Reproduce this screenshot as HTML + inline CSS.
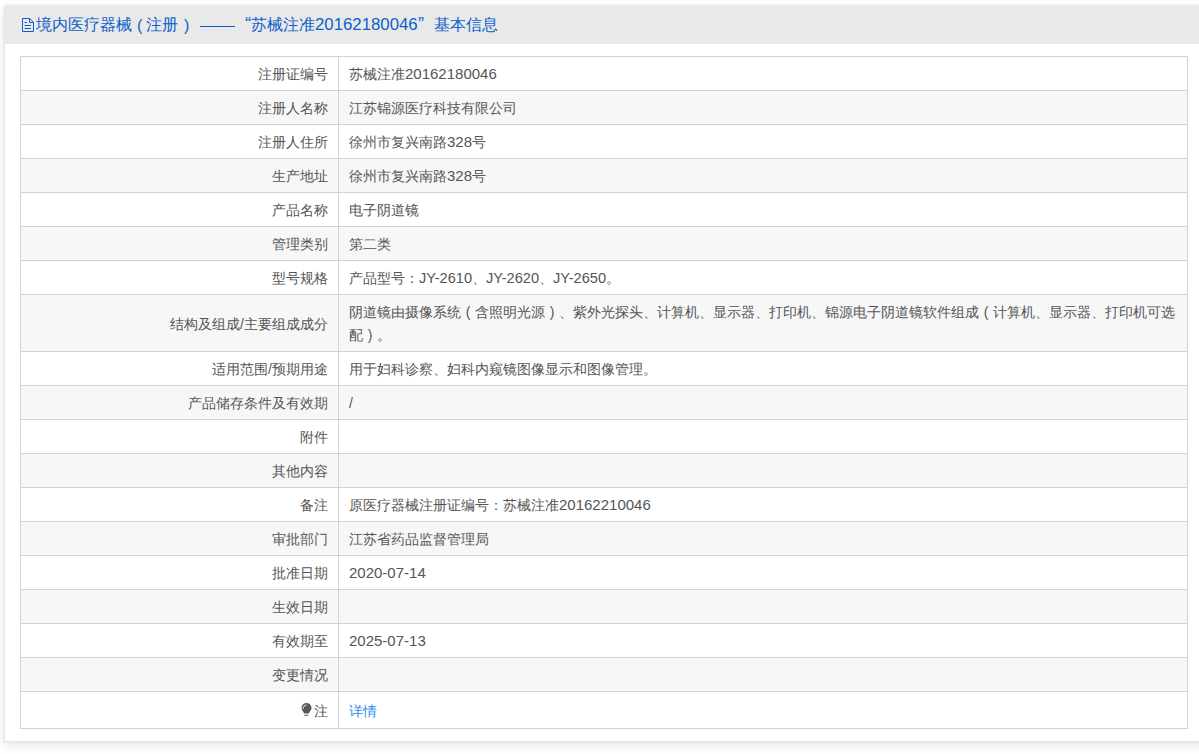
<!DOCTYPE html>
<html><head><meta charset="utf-8">
<style>
html,body{margin:0;padding:0;background:#fff;}
body{width:1199px;height:754px;overflow:hidden;position:relative;font-family:"Liberation Sans",sans-serif;font-size:14px;color:#555;}
.card{position:absolute;left:4px;top:5px;width:1210px;height:736px;background:#fff;border:1px solid #e6e6e6;border-top:0;box-shadow:0 4px 10px rgba(0,0,0,0.09),0 0 4px rgba(0,0,0,0.06);}
.hd{position:absolute;left:0;top:0;right:0;height:38px;background:#e9e9e9;border-bottom:1px solid #e7eaf2;color:#0d5fcc;font-size:16px;}
.hd .dg{font-size:16.8px;}
.hd span{position:absolute;top:9px;line-height:22px;white-space:nowrap;}
table{position:absolute;left:15px;top:51px;width:1168px;border-collapse:collapse;table-layout:fixed;}
td{border:1px solid #d3d3d3;height:33px;padding:1px 10px 0 10px;line-height:22px;box-sizing:border-box;}
tr{height:34px;}
td.l{width:318px;text-align:right;}
tr:nth-child(even) td{background:#f7f7f7;}
tr.tall{height:57px;} tr.tall td{line-height:23px;padding-top:2px;}
.fp{display:inline-block;width:14px;text-align:center;font-weight:normal;}
tr.last{height:37px;} 
i.n{font-style:normal;font-size:15px;line-height:14px;}
a{color:#2d8cf0;text-decoration:none;}
</style></head><body>
<div class="card">
<div class="hd">
<svg style="position:absolute;left:16px;top:12px" width="14" height="16" viewBox="0 0 14 16"><path d="M1.5 1.5H8.7L12.5 5.3V14.5H1.5Z M8.5 1.5V5.5H12.5 M3.6 5.5H6 M3.6 8.5H10 M3.6 11.5H10" fill="none" stroke="#0d5fcc" stroke-width="1"/></svg>
<span style="left:31px">境内医疗器械</span><span style="left:132px;font-size:16px;top:10px">(</span><span style="left:141px">注册</span><span style="left:179px;font-size:16px;top:10px">)</span><div style="position:absolute;left:195px;top:21px;width:35px;height:1px;background:#0d5fcc"></div><span style="left:240px;font-size:18px;top:8px">“</span><span style="left:246px">苏械注准</span><span style="left:310px" class="dg">20162180046</span><span style="left:413px;font-size:18px;top:8px">”</span><span style="left:429px">基本信息</span>
</div>
<table>
<tr><td class="l">注册证编号</td><td>苏械注准<i class="n">20162180046</i></td></tr>
<tr><td class="l">注册人名称</td><td>江苏锦源医疗科技有限公司</td></tr>
<tr><td class="l">注册人住所</td><td>徐州市复兴南路<i class="n">328</i>号</td></tr>
<tr><td class="l">生产地址</td><td>徐州市复兴南路<i class="n">328</i>号</td></tr>
<tr><td class="l">产品名称</td><td>电子阴道镜</td></tr>
<tr><td class="l">管理类别</td><td>第二类</td></tr>
<tr><td class="l">型号规格</td><td>产品型号：<i class="n" style="font-size:14.6px">JY-2610</i>、<i class="n" style="font-size:14.6px">JY-2620</i>、<i class="n" style="font-size:14.6px">JY-2650</i>。</td></tr>
<tr class="tall"><td class="l">结构及组成/主要组成成分</td><td>阴道镜由摄像系统<b class="fp">(</b>含照明光源<b class="fp">)</b>、紫外光探头、计算机、显示器、打印机、锦源电子阴道镜软件组成<b class="fp">(</b>计算机、显示器、打印机可选配<b class="fp">)</b>。</td></tr>
<tr><td class="l">适用范围/预期用途</td><td>用于妇科诊察、妇科内窥镜图像显示和图像管理。</td></tr>
<tr><td class="l">产品储存条件及有效期</td><td>/</td></tr>
<tr><td class="l">附件</td><td></td></tr>
<tr><td class="l">其他内容</td><td></td></tr>
<tr><td class="l">备注</td><td>原医疗器械注册证编号：苏械注准<i class="n">20162210046</i></td></tr>
<tr><td class="l">审批部门</td><td>江苏省药品监督管理局</td></tr>
<tr><td class="l">批准日期</td><td><i class="n">2020-07-14</i></td></tr>
<tr><td class="l">生效日期</td><td></td></tr>
<tr><td class="l">有效期至</td><td><i class="n">2025-07-13</i></td></tr>
<tr><td class="l">变更情况</td><td></td></tr>
<tr class="last"><td class="l"><svg style="vertical-align:0px;margin-right:2px" width="11" height="13" viewBox="0 0 11 13"><path d="M0.5 5A5 5 0 1 1 10.5 5C10.5 7.2 8.6 8.2 7.9 10.4H3.1C2.4 8.2 0.5 7.2 0.5 5Z" fill="#585858"/><rect x="3.4" y="11.8" width="4" height="1" fill="#585858"/><path d="M2.2 6A3.3 3.3 0 0 1 5.6 2.1" fill="none" stroke="#fff" stroke-width="0.9"/></svg>注</td><td><a>详情</a></td></tr>
</table>
</div>
</body></html>
